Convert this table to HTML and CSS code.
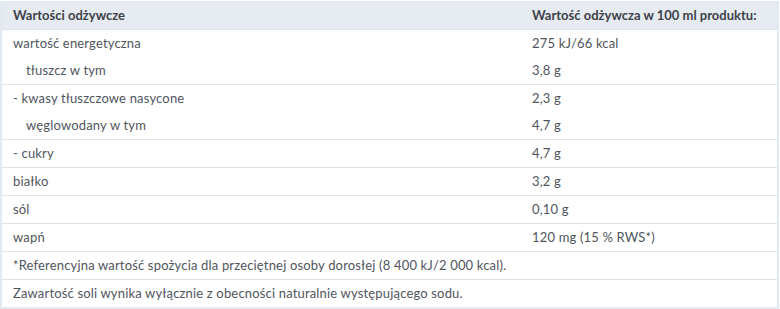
FILE: index.html
```html
<!DOCTYPE html>
<html lang="pl">
<head>
    <meta charset="UTF-8">
    <meta name="viewport" content="width=device-width, initial-scale=1.0">
    <title>Wartości odżywcze</title>
    <link rel="stylesheet" href="styles.css">
</head>
<body>
    <table class="nutrition">
        <thead>
            <tr>
                <th class="col-name">Wartości odżywcze</th>
                <th class="col-value">Wartość odżywcza w 100 ml produktu:</th>
            </tr>
        </thead>
        <tbody>
            <tr>
                <td>wartość energetyczna<br><span class="sub">tłuszcz w tym</span></td>
                <td>275 kJ/66 kcal<br>3,8 g</td>
            </tr>
            <tr>
                <td>- kwasy tłuszczowe nasycone<br><span class="sub">węglowodany w tym</span></td>
                <td>2,3 g<br>4,7 g</td>
            </tr>
            <tr>
                <td>- cukry</td>
                <td>4,7 g</td>
            </tr>
            <tr>
                <td>białko</td>
                <td>3,2 g</td>
            </tr>
            <tr>
                <td>sól</td>
                <td>0,10 g</td>
            </tr>
            <tr>
                <td>wapń</td>
                <td>120 mg (15 % RWS*)</td>
            </tr>
            <tr>
                <td colspan="2">*Referencyjna wartość spożycia dla przeciętnej osoby dorosłej (8 400 kJ/2 000 kcal).</td>
            </tr>
            <tr>
                <td colspan="2">Zawartość soli wynika wyłącznie z obecności naturalnie występującego sodu.</td>
            </tr>
        </tbody>
    </table>
</body>
</html>
```

FILE: styles.css
```css
body {
    margin: 0;
    padding: 1px 0 0 0;
    font-family: Lato, "Open Sans", sans-serif;
    font-size: 13px;
    color: #50555d;
    background: #fff;
}
.nutrition {
    width: 779px;
    border-collapse: collapse;
    border: 2px solid #e3e9f1;
    border-top: 1px solid #e3e9f1;
}
.nutrition th,
.nutrition td {
    text-align: left;
    padding: 0 11px;
    line-height: 27px;
    vertical-align: top;
    border-bottom: 1px solid #dfe4ea;
}
.nutrition td {
    letter-spacing: 0.17px;
}
.nutrition th {
    background-color: #e6ebf2;
    color: #3d4249;
    font-weight: bold;
}
.col-name {
    width: 497px;
}
.sub {
    padding-left: 13px;
}
```
